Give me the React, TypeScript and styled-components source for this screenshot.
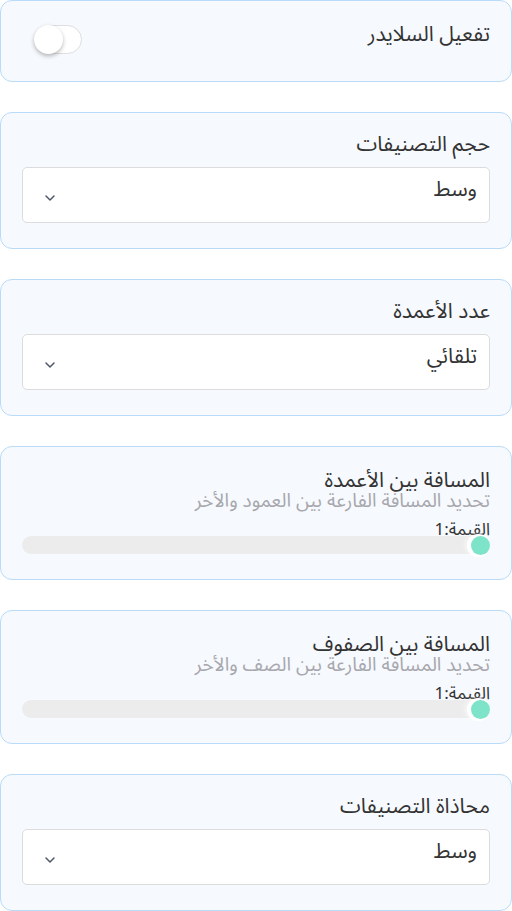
import React from "react";
import styled, { createGlobalStyle } from "styled-components";

const Global = createGlobalStyle`
  * { box-sizing: border-box; }
  body {
    margin: 0;
    background: #ffffff;
    font-family: "Noto Sans Arabic", "Noto Sans", "DejaVu Sans", sans-serif;
    color: #333333;
  }
`;

const Page = styled.div`
  direction: rtl;
  display: flex;
  flex-direction: column;
  gap: 30px;
  width: 512px;
`;

const Card = styled.section`
  background: #f6f9fd;
  border: 1px solid #b9dbf7;
  border-radius: 12px;
  padding: 18px 21px 25px;
  display: flex;
  flex-direction: column;
`;

const ToggleRow = styled.div`
  display: flex;
  justify-content: space-between;
  align-items: flex-start;
  padding-top: 2px;
`;

const Label = styled.div`
  font-size: 21px;
  line-height: 26px;
  color: #333333;
  margin-bottom: 10px;
`;

const RowLabel = styled(Label)`
  margin-bottom: 0;
`;

const Switch = styled.div<{ on?: boolean }>`
  width: 48px;
  height: 29px;
  margin: 4px 0 2px 12px;
  border-radius: 15px;
  border: 1px solid #dedede;
  background: #ffffff;
  display: flex;
  justify-content: ${(p) => (p.on ? "flex-start" : "flex-end")};
  align-items: center;
`;

const Knob = styled.div`
  width: 29px;
  height: 29px;
  margin: -1px;
  border-radius: 50%;
  background: #ffffff;
  box-shadow: 0 2px 4px rgba(0, 0, 0, 0.28);
`;

const Select = styled.div`
  height: 56px;
  background: #ffffff;
  border: 1px solid #dcdcdc;
  border-radius: 5px;
  padding: 8px 12px 0 22px;
  display: flex;
  justify-content: space-between;
  align-items: flex-start;
`;

const SelectValue = styled.span`
  font-size: 21px;
  line-height: 26px;
  color: #333333;
`;

const Chevron = styled.svg`
  align-self: center;
  width: 10px;
  height: 6px;
  margin-top: -2px;
`;

const SliderTitle = styled.div`
  font-size: 21px;
  line-height: 20px;
  padding-top: 5px;
  color: #333333;
`;

const SliderDesc = styled.div`
  font-size: 19px;
  line-height: 16px;
  color: #a7a7ad;
  margin-top: 3px;
  margin-bottom: 15px;
`;

const SliderValue = styled.div`
  font-size: 17px;
  line-height: 12px;
  color: #333333;
`;

const Track = styled.div`
  height: 18px;
  border-radius: 9px;
  background: #ececec;
  display: flex;
  justify-content: flex-start;
  align-items: center;
`;

const Thumb = styled.div`
  width: 19px;
  height: 19px;
  border-radius: 50%;
  background: #7de3c9;
  box-shadow: -2px 0 0 2px #ffffff, -5px 0 6px rgba(255, 255, 255, 0.9);
`;

function SelectBox({ value }: { value: string }) {
  return (
    <Select>
      <SelectValue>{value}</SelectValue>
      <Chevron viewBox="0 0 10 6">
        <path d="M1 1l4 4 4-4" fill="none" stroke="#4f5665" strokeWidth="1.5" strokeLinecap="round" strokeLinejoin="round" />
      </Chevron>
    </Select>
  );
}

function SelectCard({ label, value }: { label: string; value: string }) {
  return (
    <Card>
      <Label>{label}</Label>
      <SelectBox value={value} />
    </Card>
  );
}

function SliderCard({ title, desc, value }: { title: string; desc: string; value: number }) {
  return (
    <Card>
      <SliderTitle>{title}</SliderTitle>
      <SliderDesc>{desc}</SliderDesc>
      <SliderValue>القيمة:{value}</SliderValue>
      <Track>
        <Thumb />
      </Track>
    </Card>
  );
}

export default function App() {
  return (
    <>
      <Global />
      <Page>
        <Card>
          <ToggleRow>
            <RowLabel>تفعيل السلايدر</RowLabel>
            <Switch>
              <Knob />
            </Switch>
          </ToggleRow>
        </Card>
        <SelectCard label="حجم التصنيفات" value="وسط" />
        <SelectCard label="عدد الأعمدة" value="تلقائي" />
        <SliderCard
          title="المسافة بين الأعمدة"
          desc="تحديد المسافة الفارعة بين العمود والأخر"
          value={1}
        />
        <SliderCard
          title="المسافة بين الصفوف"
          desc="تحديد المسافة الفارعة بين الصف والأخر"
          value={1}
        />
        <SelectCard label="محاذاة التصنيفات" value="وسط" />
      </Page>
    </>
  );
}
